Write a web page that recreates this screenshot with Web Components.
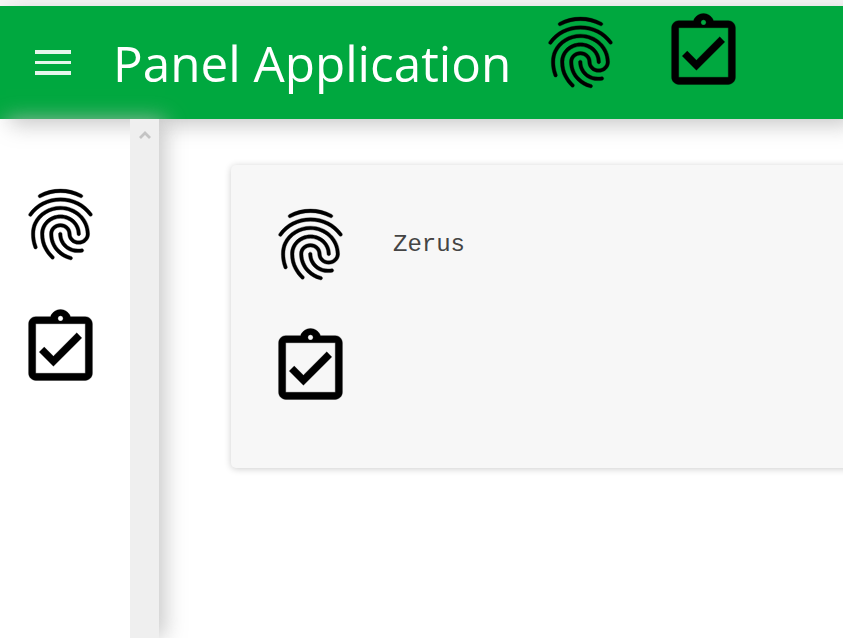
<!DOCTYPE html>
<html>
<head>
<meta charset="utf-8">
<title>Panel Application</title>
<style>
    html, body { margin: 0; height: 100%; overflow: hidden; background: #fff; }
    body { font-family: "Open Sans", sans-serif; }
</style>
</head>
<body>

<panel-app>
    <panel-header slot="header" title-text="Panel Application">
        <panel-icon name="fingerprint"></panel-icon>
        <panel-icon name="assignment"></panel-icon>
    </panel-header>
    <panel-sidebar slot="sidebar">
        <panel-icon name="fingerprint"></panel-icon>
        <panel-icon name="assignment"></panel-icon>
    </panel-sidebar>
    <panel-card>
        <panel-row label="Zerus"><panel-icon name="fingerprint"></panel-icon></panel-row>
        <panel-row><panel-icon name="assignment"></panel-icon></panel-row>
    </panel-card>
</panel-app>

<script>
const ICONS = {
    fingerprint: 'M17.81 4.47c-.08 0-.16-.02-.23-.06C15.66 3.42 14 3 12.01 3c-1.98 0-3.86.47-5.57 1.41-.24.13-.54.04-.68-.2-.13-.24-.04-.55.2-.68C7.82 2.52 9.86 2 12.01 2c2.13 0 3.99.47 6.03 1.52.25.13.34.43.21.67-.09.18-.26.28-.44.28zM3.5 9.72c-.1 0-.2-.03-.29-.09-.23-.16-.28-.47-.12-.7.99-1.4 2.25-2.5 3.75-3.27C9.98 4.04 14 4.03 17.15 5.65c1.5.77 2.76 1.86 3.75 3.25.16.22.11.54-.12.7-.23.16-.54.11-.7-.12-.9-1.26-2.04-2.25-3.39-2.94-2.87-1.47-6.54-1.47-9.4.01-1.36.7-2.5 1.7-3.4 2.96-.08.14-.23.21-.39.21zm6.25 12.07c-.13 0-.26-.05-.35-.15-.87-.87-1.34-1.43-2.01-2.64-.69-1.23-1.05-2.73-1.05-4.34 0-2.97 2.54-5.39 5.66-5.39s5.66 2.42 5.66 5.39c0 .28-.22.5-.5.5s-.5-.22-.5-.5c0-2.42-2.09-4.39-4.66-4.39-2.57 0-4.66 1.97-4.66 4.39 0 1.44.32 2.77.93 3.85.64 1.15 1.08 1.64 1.85 2.42.19.2.19.51 0 .71-.11.1-.24.15-.37.15zm7.17-1.85c-1.19 0-2.24-.3-3.1-.89-1.49-1.01-2.38-2.65-2.38-4.39 0-.28.22-.5.5-.5s.5.22.5.5c0 1.41.72 2.74 1.94 3.56.71.48 1.54.71 2.54.71.24 0 .64-.03 1.04-.1.27-.05.53.13.58.41.05.27-.13.53-.41.58-.57.11-1.07.12-1.21.12zM14.91 22c-.04 0-.09-.01-.13-.02-1.59-.44-2.63-1.03-3.72-2.1-1.4-1.39-2.17-3.24-2.17-5.22 0-1.62 1.38-2.94 3.08-2.94 1.7 0 3.08 1.32 3.08 2.94 0 1.07.93 1.94 2.08 1.94s2.08-.87 2.08-1.94c0-3.77-3.25-6.83-7.25-6.83-2.84 0-5.44 1.58-6.61 4.03-.39.81-.59 1.76-.59 2.8 0 .78.07 2.01.67 3.61.1.26-.03.55-.29.64-.26.1-.55-.04-.64-.29-.49-1.31-.73-2.61-.73-3.96 0-1.2.23-2.29.68-3.24 1.33-2.79 4.28-4.6 7.51-4.6 4.55 0 8.25 3.51 8.25 7.83 0 1.62-1.38 2.94-3.08 2.94s-3.08-1.32-3.08-2.94c0-1.07-.93-1.94-2.08-1.94s-2.08.87-2.08 1.94c0 1.71.66 3.31 1.87 4.51.95.94 1.86 1.46 3.27 1.85.27.07.42.35.35.61-.05.23-.26.38-.47.38z',
    assignment: 'M18 9l-1.41-1.42L10 14.17l-2.59-2.58L6 13l4 4zm1-6h-4.18C14.4 1.84 13.3 1 12 1s-2.4.84-2.82 2H5c-1.1 0-2 .9-2 2v14c0 1.1.9 2 2 2h14c1.1 0 2-.9 2-2V5c0-1.1-.9-2-2-2zm-7-.25c.41 0 .75.34.75.75s-.34.75-.75.75-.75-.34-.75-.75.34-.75.75-.75zM19 19H5V5h14v14z'
};

class PanelIcon extends HTMLElement {
    constructor() {
        super();
        this.attachShadow({ mode: 'open' });
        const d = ICONS[this.getAttribute('name')];
        this.shadowRoot.innerHTML = `
            <style>
                :host { display: block; width: 85px; height: 85px; flex: none; }
                svg { display: block; width: 100%; height: 100%; fill: #000; stroke: #000; stroke-width: .1; }
            </style>
            <svg viewBox="0 0 24 24"><path d="${d}"></path></svg>
        `;
    }
}

class PanelApp extends HTMLElement {
    constructor() {
        super();
        this.attachShadow({ mode: 'open' });
        this.shadowRoot.innerHTML = `
            <style>
                :host { display: flex; flex-direction: column; height: 638px; padding-top: 6px; box-sizing: border-box; background: #f7f7f7; overflow: hidden; }
                .body { flex: 1; display: flex; min-height: 0; background: #fff; }
                main { flex: 1; min-width: 0; padding: 46px 0 0 72px; }
            </style>
            <slot name="header"></slot>
            <div class="body">
                <slot name="sidebar"></slot>
                <main><slot></slot></main>
            </div>
        `;
    }
}

class PanelHeader extends HTMLElement {
    constructor() {
        super();
        this.attachShadow({ mode: 'open' });
        this.shadowRoot.innerHTML = `
            <style>
                :host { display: flex; align-items: center; height: 113px; flex: none; background: #00a83f; position: relative; z-index: 1; box-shadow: 10px 6px 20px rgba(187,187,187,.8); color: #fff; }
                .menu { width: 36px; height: 25px; margin: 0 0 1px 35px; display: flex; flex-direction: column; justify-content: space-between; }
                .menu i { display: block; height: 4px; background: #e6f6ec; }
                .menu i:nth-child(2) { height: 3px; }
                h1 { margin: 0 0 0 42px; width: 396px; flex: none; font: 400 49.4px/60px "Open Sans", sans-serif; white-space: nowrap; }
                .icons { display: flex; gap: 38px; margin: 0 0 20px 29px; }
            </style>
            <div class="menu"><i></i><i></i><i></i></div>
            <h1>${this.getAttribute('title-text')}</h1>
            <div class="icons"><slot></slot></div>
        `;
    }
}

class PanelSidebar extends HTMLElement {
    constructor() {
        super();
        this.attachShadow({ mode: 'open' });
        this.shadowRoot.innerHTML = `
            <style>
                /* no background: the header shadow has to show through, this shadow falls on the green */
                :host { display: flex; width: 159px; flex: none; position: relative; z-index: 2; box-shadow: 6px 0 20px rgba(187,187,187,.8); }
                .list { flex: 1; display: flex; flex-direction: column; align-items: center; gap: 39px; padding: 63px 9px 0 0; box-sizing: border-box; }
                .track { width: 29px; background: #efefef; display: flex; justify-content: center; padding-top: 11px; box-sizing: border-box; }
                .track svg { display: block; width: 12px; height: 9px; }
            </style>
            <div class="list"><slot></slot></div>
            <div class="track">
                <svg viewBox="0 0 12 9"><path d="M1 8l5-5 5 5" fill="none" stroke="#c4c4c4" stroke-width="2.8"></path></svg>
            </div>
        `;
    }
}

class PanelCard extends HTMLElement {
    constructor() {
        super();
        this.attachShadow({ mode: 'open' });
        this.shadowRoot.innerHTML = `
            <style>
                :host { display: flex; flex-direction: column; gap: 38px; height: 303px; width: 700px; box-sizing: border-box; padding: 37px 0 0 37px; background: #f7f7f7; border-radius: 5px; box-shadow: 0 1px 7px rgba(0,0,0,.2); }
            </style>
            <slot></slot>
        `;
    }
}

class PanelRow extends HTMLElement {
    constructor() {
        super();
        this.attachShadow({ mode: 'open' });
        const label = this.getAttribute('label') || '';
        this.shadowRoot.innerHTML = `
            <style>
                :host { display: flex; align-items: center; gap: 40px; }
                span { font: 24px "Liberation Mono", monospace; color: #444; }
            </style>
            <slot></slot>
            <span>${label}</span>
        `;
    }
}

customElements.define('panel-icon', PanelIcon);
customElements.define('panel-app', PanelApp);
customElements.define('panel-header', PanelHeader);
customElements.define('panel-sidebar', PanelSidebar);
customElements.define('panel-card', PanelCard);
customElements.define('panel-row', PanelRow);
</script>
</body>
</html>
